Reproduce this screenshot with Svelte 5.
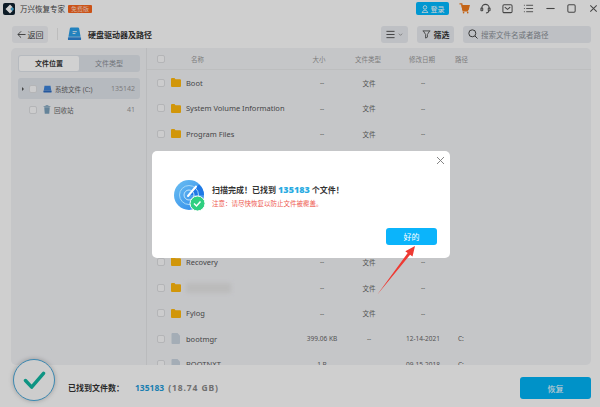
<script>
  const top = [
    { name: 'Boot', size: '--', type: '文件', date: '--', path: '', kind: 'folder' },
    { name: 'System Volume Information', size: '--', type: '文件', date: '--', path: '', kind: 'folder' },
    { name: 'Program Files', size: '--', type: '文件', date: '--', path: '', kind: 'folder' }
  ];
  const bottom = [
    { name: 'Recovery', size: '--', type: '文件', date: '--', path: '', kind: 'folder' },
    { name: '', size: '--', type: '文件', date: '--', path: '', kind: 'folder' },
    { name: 'Fylog', size: '--', type: '文件', date: '--', path: '', kind: 'folder' },
    { name: 'bootmgr', size: '399.06 KB', type: '--', date: '12-14-2021', path: 'C:', kind: 'file' },
    { name: 'BOOTNXT', size: '1 B', type: '--', date: '09-15-2018', path: 'C:', kind: 'file' }
  ];
</script>

{#snippet fileRow(r)}
  <div class="row">
    <span class="check"></span>
    {#if r.kind === 'folder'}
      <svg class="ico" viewBox="0 0 10 9" width="10" height="9"><path d="M0 1q0-1 1-1h2.500l1 1.200H9q1 0 1 1V8q0 1-1 1H1q-1 0-1-1z" fill="#ffb70d"/></svg>
    {:else}
      <svg class="ico" viewBox="0 0 10 11" width="10" height="11"><path d="M1.500 0H6.500L9 2.800V10q0 1-1 1H1.500q-1 0-1-1V1q0-1 1-1z" fill="#c8d3df"/></svg>
    {/if}
    {#if r.name}
      <span class="f-name">{r.name}</span>
    {:else}
      <span class="f-name smudge"></span>
    {/if}
    <span class="c-size">{r.size}</span>
    <span class="c-type">{r.type}</span>
    <span class="c-date">{r.date}</span>
    <span class="c-path">{r.path}</span>
  </div>
{/snippet}

<div class="app">
  <header class="titlebar">
    <div class="logo">
      <svg viewBox="0 0 12 12" width="12" height="12"><path d="M7 1.500 2.500 6 7 10.500 9.500 8 7.500 6 9.500 4z" fill="#fff"/><path d="M7.500 6 9.500 4 11 6 9.500 8z" fill="#4fb9e6"/></svg>
    </div>
    <span class="app-name">万兴恢复专家</span>
    <span class="badge">免费版</span>
    <div class="spacer"></div>
    <button class="login">
      <svg viewBox="0 0 10 10" width="8" height="8" fill="none" stroke="#fff" stroke-width="1"><circle cx="5" cy="3" r="2.200"/><path d="M1 9.500h8M2 9.500c0-2 1.200-3 3-3s3 1 3 3"/></svg>
      登录
    </button>
    <div class="win-icons">
      <svg viewBox="0 0 12 12" width="11" height="11" fill="none" stroke="#f07a1c" stroke-width="1.500"><path d="M0.500 1H3L4.500 8.500H10"/><path d="M3.500 3H11L10 7H4.200z" fill="#f07a1c"/><circle cx="5" cy="10.500" r=".9" fill="#f07a1c" stroke="none"/><circle cx="9.500" cy="10.500" r=".9" fill="#f07a1c" stroke="none"/></svg>
      <svg viewBox="0 0 12 12" width="11" height="11" fill="none" stroke="#555" stroke-width="1.100"><path d="M2 7V5.500a4 4 0 0 1 8 0V7"/><rect x="1" y="5.500" width="2" height="3" rx=".6"/><rect x="9" y="5.500" width="2" height="3" rx=".6"/><path d="M9.500 8.500c0 1.400-1.200 2.300-3 2.300"/></svg>
      <svg viewBox="0 0 12 12" width="11" height="11" fill="none" stroke="#555" stroke-width="1.100"><rect x="1" y="2" width="10" height="8.500" rx="1.300"/><path d="M3 4.500 6 7l3-2.500"/></svg>
      <svg viewBox="0 0 12 12" width="11" height="11" fill="none" stroke="#555" stroke-width="1"><path d="M3.500 2.500H11M3.500 6H11M3.500 9.500H11M1 2.500h1M1 6h1M1 9.500h1"/></svg>
      <svg viewBox="0 0 12 12" width="11" height="11" fill="none" stroke="#555" stroke-width="1.200"><path d="M1.500 6h9"/></svg>
      <svg viewBox="0 0 12 12" width="11" height="11" fill="none" stroke="#555" stroke-width="1.100"><rect x="2" y="2" width="8" height="8" rx="1.200"/></svg>
      <svg viewBox="0 0 12 12" width="11" height="11" fill="none" stroke="#555" stroke-width="1.100"><path d="M2.500 2.500l7 7M9.500 2.500l-7 7"/></svg>
    </div>
  </header>

  <div class="toolbar">
    <button class="back">
      <svg viewBox="0 0 10 10" width="9" height="9" fill="none" stroke="#444" stroke-width="1"><path d="M9.500 5H1M4.500 1.500 1 5l3.500 3.500"/></svg>
      返回
    </button>
    <span class="divider"></span>
    <svg class="drive" viewBox="0 0 16 14" width="15" height="14">
      <path d="M3 1.500Q3 0 4.500 0h7Q13 0 13 1.500L14.500 10h-13z" fill="#2b9fe8"/>
      <rect x="1" y="10.500" width="14" height="3" rx=".6" fill="#2d84d6"/>
      <path d="M6 4.500h4.500M6 6.500h3" stroke="#fff" stroke-width=".9"/>
    </svg>
    <span class="crumb">硬盘驱动器及路径</span>
    <div class="spacer"></div>
    <button class="tool view">
      <svg viewBox="0 0 10 10" width="9" height="9" fill="none" stroke="#444" stroke-width="1"><path d="M.5 1.500h9M.5 5h9M.5 8.500h9"/></svg>
      <svg viewBox="0 0 6 6" width="5" height="5" fill="none" stroke="#777" stroke-width=".8"><path d="M1 2l2 2 2-2"/></svg>
    </button>
    <button class="tool filter">
      <svg viewBox="0 0 10 10" width="9" height="9" fill="none" stroke="#444" stroke-width=".9"><path d="M.8 1h8.400M1.500 1l2.500 4v4l2-1V5l2.500-4"/></svg>
      筛选
    </button>
    <div class="search">
      <svg viewBox="0 0 10 10" width="10" height="10" fill="none" stroke="#444" stroke-width="1"><circle cx="4.300" cy="4.300" r="3.500"/><path d="M7 7l2.500 2.500"/></svg>
      <span>搜索文件名或者路径</span>
    </div>
  </div>

  <main class="panel">
    <aside class="side">
      <div class="tabs">
        <span class="tab active">文件位置</span>
        <span class="tab">文件类型</span>
      </div>
      <div class="loc selected">
        <span class="caret"></span>
        <span class="check"></span>
        <svg viewBox="0 0 12 10" width="9" height="8"><path d="M2 .5h8l1 6.500H1z" fill="#3b82d8"/><rect x=".5" y="7" width="11" height="2.500" rx=".5" fill="#2c6bc0"/></svg>
        <span class="loc-name">系统文件 (C:)</span>
        <span class="loc-count">135142</span>
      </div>
      <div class="loc">
        <span class="caret none"></span>
        <span class="check"></span>
        <svg viewBox="0 0 10 12" width="8" height="9"><path d="M.5 2h9M3.500 2V.7h3V2" stroke="#7aa0bb" fill="none"/><path d="M1.300 3h7.400l-.7 8.500H2z" fill="#7aa0bb"/></svg>
        <span class="loc-name">回收站</span>
        <span class="loc-count">41</span>
      </div>
    </aside>

    <section class="table">
      <div class="row head">
        <span class="check"></span>
        <span class="c-name">名称</span>
        <span class="c-size">大小</span>
        <span class="c-type">文件类型</span>
        <span class="c-date">修改日期</span>
        <span class="c-path">路径</span>
      </div>
      {#each top as r}
        {@render fileRow(r)}
      {/each}
      <div class="covered"></div>
      {#each bottom as r}
        {@render fileRow(r)}
      {/each}
    </section>
  </main>

  <footer class="footer">
    <div class="done">
      <svg viewBox="0 0 24 20" width="23" height="19" fill="none" stroke="#12b5a0" stroke-width="3.600" stroke-linecap="round" stroke-linejoin="round"><path d="M2.500 10 9 17 21.500 2.500"/></svg>
    </div>
    <span class="found">已找到文件数：</span>
    <span class="found-num">135183</span>
    <span class="found-size">(18.74 GB)</span>
    <div class="spacer"></div>
    <button class="recover">恢复</button>
  </footer>

  <div class="overlay"></div>

  <div class="modal">
    <button class="close" aria-label="close">
      <svg viewBox="0 0 9 9" width="9" height="9" fill="none" stroke="#777" stroke-width=".9"><path d="M1 1l7 7M8 1 1 8"/></svg>
    </button>
    <div class="modal-body">
      <svg class="radar" viewBox="0 0 32 32" width="32" height="32">
        <defs>
          <linearGradient id="rg" x1="0" y1="0" x2="1" y2="1"><stop offset="0" stop-color="#6cc0f2"/><stop offset="1" stop-color="#2b86ea"/></linearGradient>
        </defs>
        <circle cx="15" cy="15" r="15" fill="url(#rg)"/>
        <path d="M15 15 25 4.500A15 15 0 0 1 30 15z" fill="#1f78e6"/>
        <circle cx="15" cy="15" r="9.500" fill="none" stroke="#a5d8f7" stroke-width="1"/>
        <circle cx="15" cy="15" r="5" fill="none" stroke="#c4e6fa" stroke-width="1"/>
        <path d="M14 16 22 6.500" stroke="#fff" stroke-width="2" stroke-linecap="round"/>
        <circle cx="23.500" cy="23.500" r="7.500" fill="#2fcf80" stroke="#fff" stroke-width="1"/>
        <path d="M20 23.500l2.500 2.500 4-4.500" fill="none" stroke="#fff" stroke-width="1.500"/>
      </svg>
      <div class="msg">
        <p class="msg-title">扫描完成！已找到 <b>135183</b> 个文件！</p>
        <p class="msg-note">注意：请尽快恢复以防止文件被覆盖。</p>
      </div>
    </div>
    <div class="modal-foot">
      <button class="ok">好的</button>
    </div>
  </div>

  <svg class="arrow" viewBox="0 0 60 70" width="60" height="70">
    <path d="M5 53 35.700 11 33.300 9.200 43 4 40.500 14.600 38.100 12.800z" fill="#ee3a33"/>
  </svg>
</div>

<style>
  :global(body) {
    margin: 0;
    background: #fff;
  }

  .app {
    position: relative;
    width: 600px;
    height: 407px;
    overflow: hidden;
    display: flex;
    flex-direction: column;
    background: #fdfdfd;
    font-family: "Noto Sans", "Noto Sans CJK SC", sans-serif;
    color: #333;
    font-size: 9px;
  }

  button {
    border: 0;
    padding: 0;
    font: inherit;
    color: inherit;
    background: none;
  }

  .spacer {
    flex: 1;
  }

  .titlebar {
    height: 19px;
    box-sizing: border-box;
    display: flex;
    align-items: center;
    padding: 0 1.500px 2px 3px;
    flex: none;
  }

  .logo {
    width: 12px;
    height: 12px;
    border-radius: 2px;
    background: #10222f;
    margin-right: 5px;
  }

  .logo svg {
    display: block;
  }

  .app-name {
    font-size: 7.500px;
    line-height: 12px;
    color: #444;
    width: 48px;
    white-space: nowrap;
  }

  .badge {
    width: 24px;
    height: 8px;
    line-height: 8px;
    text-align: center;
    font-size: 6px;
    color: #ffd9c4;
    background: #f8641d;
    border-radius: 1px;
  }

  .login {
    width: 33px;
    height: 13px;
    display: flex;
    align-items: center;
    justify-content: center;
    gap: 2px;
    background: #00b9ff;
    border-radius: 2px;
    font-size: 7px;
    color: #fff;
  }

  .win-icons {
    display: flex;
    align-items: center;
    gap: 10.500px;
    margin-left: 9.500px;
  }

  .win-icons svg {
    display: block;
  }

  .toolbar {
    height: 18px;
    margin-top: 6px;
    padding: 0 9px 0 12px;
    box-sizing: border-box;
    display: flex;
    align-items: center;
    flex: none;
  }

  .back {
    width: 36px;
    height: 17px;
    display: flex;
    align-items: center;
    justify-content: center;
    gap: 2px;
    background: #eef0f3;
    border-radius: 3px;
    font-size: 8px;
    color: #444;
  }

  .divider {
    width: 1px;
    height: 12px;
    background: #e7e7e7;
    margin: 0 9px 0 9px;
  }

  .drive {
    display: block;
    margin-right: 6px;
  }

  .crumb {
    font-size: 8px;
    font-weight: 700;
    color: #333;
  }

  .tool {
    height: 17px;
    display: flex;
    align-items: center;
    justify-content: center;
    background: #e8ebef;
    border-radius: 3px;
  }

  .view {
    width: 27px;
    gap: 3px;
  }

  .filter {
    width: 37px;
    gap: 3px;
    margin-left: 9px;
    font-size: 8px;
    font-weight: 700;
  }

  .search {
    width: 128px;
    height: 17px;
    margin-left: 9px;
    padding-left: 5px;
    box-sizing: border-box;
    display: flex;
    align-items: center;
    gap: 3px;
    background: #e8ebef;
    border-radius: 3px;
    font-size: 7.500px;
    color: #8a8f96;
    white-space: nowrap;
  }

  .panel {
    height: 317px;
    margin: 5px 9px 0 11px;
    flex: none;
    display: flex;
    background: #f1f2f5;
    border-radius: 5px;
    overflow: hidden;
  }

  .side {
    width: 136px;
    flex: none;
    padding: 7px 6px 0 7px;
    box-sizing: border-box;
    border-right: 1px solid #e3e4e7;
  }

  .tabs {
    height: 17px;
    display: flex;
    padding: 1px;
    box-sizing: border-box;
    background: #dfe3ea;
    border-radius: 3px;
    margin-bottom: 6px;
  }

  .tab {
    flex: 1;
    text-align: center;
    line-height: 15px;
    font-size: 7px;
    color: #8a8f96;
  }

  .tab.active {
    flex: none;
    width: 60px;
    background: #fff;
    border-radius: 2px;
    color: #333;
    font-weight: 700;
  }

  .loc {
    height: 21px;
    display: flex;
    align-items: center;
    padding: 0 5px 0 4px;
    border-radius: 3px;
    color: #666;
    font-size: 6.500px;
  }

  .loc.selected {
    background: #dfe3ea;
  }

  .caret {
    width: 0;
    height: 0;
    border-left: 2.500px solid #555;
    border-top: 2px solid transparent;
    border-bottom: 2px solid transparent;
    margin-right: 5px;
  }

  .caret.none {
    border-left-color: transparent;
  }

  .check {
    width: 8px;
    height: 8px;
    border: 1px solid #dcdde0;
    background: #f9f9fa;
    border-radius: 2px;
    box-sizing: border-box;
    flex: none;
  }

  .loc .check {
    margin-right: 6px;
  }

  .loc svg {
    margin-right: 3px;
    display: block;
  }

  .loc-name {
    flex: 1;
    white-space: nowrap;
  }

  .loc-count {
    color: #999;
    font-size: 7px;
  }

  .table {
    flex: 1;
    min-width: 0;
  }

  .row {
    height: 25.600px;
    display: grid;
    grid-template-columns: 14px 15px 114px 44px 50px 58px 1fr;
    align-items: center;
    padding-left: 10px;
    font-size: 6.500px;
    color: #666;
    white-space: nowrap;
  }

  .row.head {
    height: 22px;
    border-bottom: 1px solid #e7e8ea;
    box-sizing: border-box;
    color: #999;
    grid-template-columns: 34px 106px 44px 54px 54px 1fr;
  }

  .covered {
    height: 102.400px;
  }

  .ico {
    display: block;
  }

  .f-name {
    font-size: 7.500px;
    color: #555;
  }

  .smudge {
    display: block;
    width: 45px;
    height: 10px;
    background: #e4e4e4;
    filter: blur(2px);
  }

  .c-size,
  .c-type,
  .c-date {
    text-align: center;
  }

  .c-path {
    padding-left: 6px;
  }

  .footer {
    flex: 1;
    position: relative;
    display: flex;
    align-items: center;
    padding: 2px 9px 0 68px;
    font-size: 8px;
    background: #fdfdfd;
  }

  .done {
    position: absolute;
    left: 13px;
    top: -6px;
    width: 42px;
    height: 42px;
    box-sizing: border-box;
    border-radius: 50%;
    display: flex;
    align-items: center;
    justify-content: center;
    background: #fbfbfb;
    border: 1px solid #4aa7d8;
    box-shadow: 0 0 5px rgba(0, 0, 0, .25);
  }

  .found {
    font-weight: 700;
    color: #333;
    width: 67px;
  }

  .found-num {
    font-size: 8.500px;
    font-weight: 700;
    color: #1f9bd8;
    margin-right: 4px;
  }

  .found-size {
    font-size: 8.500px;
    letter-spacing: .9px;
    color: #888;
    font-weight: 700;
  }

  .recover {
    width: 71px;
    height: 22px;
    background: #00b2f5;
    color: #fff;
    border-radius: 3px;
    font-size: 8px;
    margin-top: 2px;
  }

  .overlay {
    position: absolute;
    inset: 0;
    background: rgba(0, 0, 0, .18);
  }

  .modal {
    position: absolute;
    left: 152px;
    top: 151px;
    width: 298px;
    height: 107px;
    box-sizing: border-box;
    background: #fff;
    border-radius: 5px;
    padding: 29px 13px 13px 22px;
    display: flex;
    flex-direction: column;
    justify-content: space-between;
  }

  .close {
    position: absolute;
    top: 5px;
    right: 5px;
    width: 9px;
    height: 9px;
    display: block;
  }

  .close svg {
    display: block;
  }

  .modal-body {
    display: flex;
    align-items: center;
    gap: 6px;
  }

  .radar {
    display: block;
    flex: none;
  }

  .msg p {
    margin: 0;
  }

  .msg-title {
    font-size: 8px;
    line-height: 12px;
    font-weight: 700;
    color: #333;
  }

  .msg-title b {
    color: #29abe2;
    font-size: 9px;
  }

  .msg .msg-note {
    font-size: 6.500px;
    line-height: 11px;
    margin-top: 2px;
    color: #ee5a50;
  }

  .modal-foot {
    display: flex;
    justify-content: flex-end;
  }

  .ok {
    width: 51px;
    height: 17px;
    border-radius: 3px;
    background: #0bb4fb;
    color: #fff;
    font-size: 8px;
  }

  .arrow {
    position: absolute;
    left: 372px;
    top: 242px;
    display: block;
  }
</style>
